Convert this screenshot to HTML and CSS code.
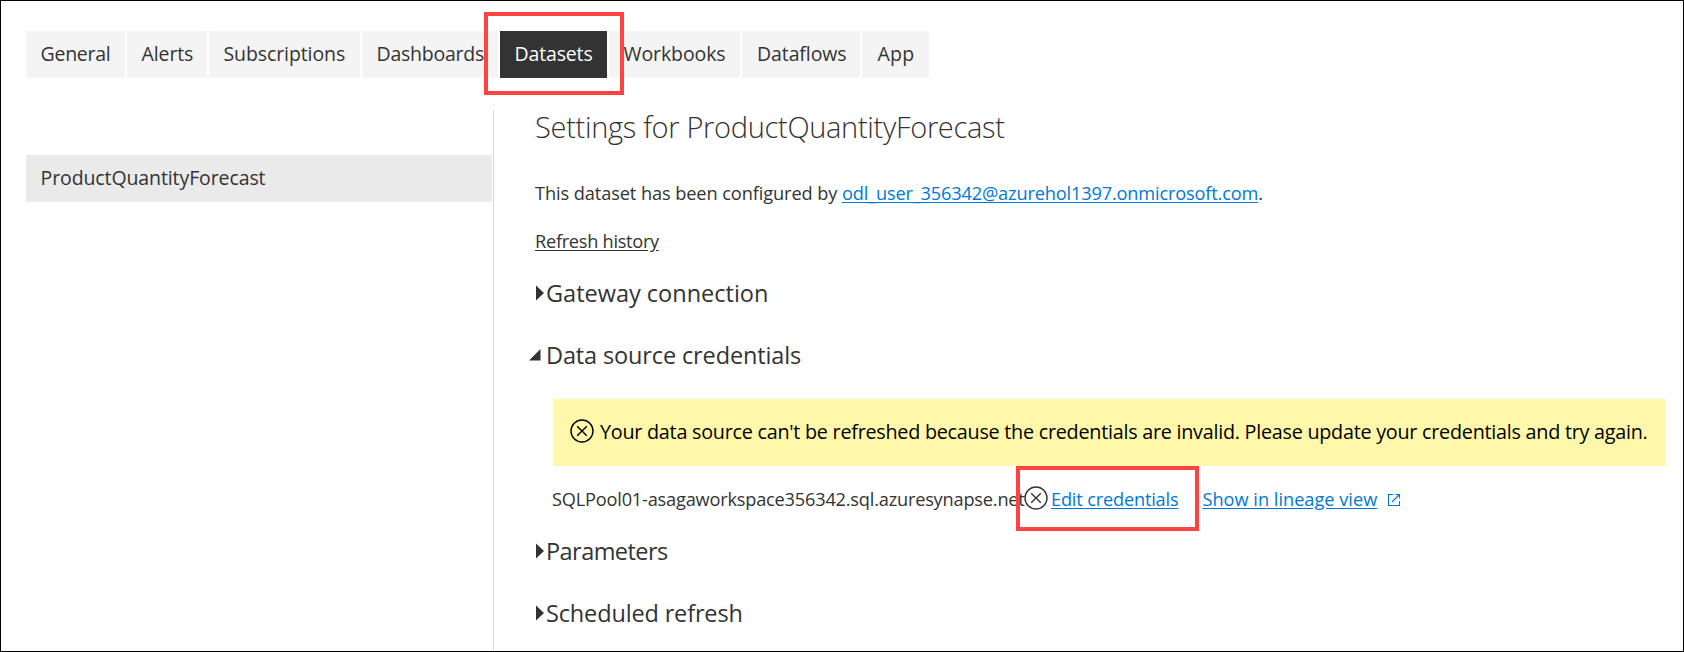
FILE: index.html
```html
<!DOCTYPE html>
<html lang="en">
<head>
<meta charset="utf-8">
<title>Dataset settings</title>
<link rel="stylesheet" href="styles.css">
</head>
<body>
<div class="page">
  <nav class="tabs">
    <a class="tab general">General</a>
    <a class="tab alerts">Alerts</a>
    <a class="tab subscriptions">Subscriptions</a>
    <a class="tab dashboards">Dashboards</a>
    <a class="tab datasets active">Datasets</a>
    <a class="tab workbooks">Workbooks</a>
    <a class="tab dataflows">Dataflows</a>
    <a class="tab app">App</a>
  </nav>
  <div class="columns">
    <aside class="sidebar">
      <div class="dataset">ProductQuantityForecast</div>
    </aside>
    <main class="settings">
      <h1 class="title">Settings for ProductQuantityForecast</h1>
      <p class="configured">This dataset has been configured by <a class="link owner">odl_user_356342@azurehol1397.onmicrosoft.com</a>.</p>
      <p class="history"><a>Refresh history</a></p>
      <h2 class="section gateway"><svg class="arrow" viewBox="0 0 12 16"><path d="M1 0.5 9 8 1 15.5Z"/></svg>Gateway connection</h2>
      <h2 class="section credentials"><svg class="arrow open" viewBox="0 0 12 12"><path d="M11.5 0V11.5H0Z"/></svg>Data source credentials</h2>
      <div class="banner">
        <svg class="error" viewBox="0 0 24 24"><circle cx="12" cy="12" r="11"/><path d="M7.2 7.2 16.8 16.8M16.8 7.2 7.2 16.8"/></svg>
        <span>Your data source can't be refreshed because the credentials are invalid. Please update your credentials and try again.</span>
      </div>
      <div class="source">
        <span class="server">SQLPool01-asagaworkspace356342.sql.azuresynapse.net</span>
        <svg class="error" viewBox="0 0 24 24"><circle cx="12" cy="12" r="11"/><path d="M7.2 7.2 16.8 16.8M16.8 7.2 7.2 16.8"/></svg>
        <a class="link edit">Edit credentials</a>
        <a class="link lineage">Show in lineage view</a>
        <svg class="external" viewBox="0 0 14 14"><path d="M6 1.5H1.5V12.5H12.5V8M8.5 1.5H12.5V5.5M12.5 1.5 5 9"/></svg>
      </div>
      <h2 class="section parameters"><svg class="arrow" viewBox="0 0 12 16"><path d="M1 0.5 9 8 1 15.5Z"/></svg>Parameters</h2>
      <h2 class="section scheduled"><svg class="arrow" viewBox="0 0 12 16"><path d="M1 0.5 9 8 1 15.5Z"/></svg>Scheduled refresh</h2>
    </main>
  </div>
  <div class="marker marker-tab"></div>
  <div class="marker marker-edit"></div>
</div>
</body>
</html>
```
FILE: styles.css
```css
* { box-sizing: border-box; }
body { margin: 0; background: #fff; color: #333; font-family: "Open Sans", "Noto Sans", sans-serif; }
.page { position: relative; width: 1684px; height: 652px; border: 1px solid #000; padding: 30px 0 0 25px; overflow: hidden; }
.tabs { display: flex; gap: 2px; height: 47px; }
.tab { background: #f4f4f4; font-size: 19.5px; line-height: 45px; padding-left: 14.5px; letter-spacing: -0.1px; white-space: nowrap; }
.general { width: 99px; letter-spacing: -0.25px; }
.alerts { width: 80px; }
.subscriptions { width: 151px; }
.dashboards { width: 136px; letter-spacing: -0.25px; }
.datasets { width: 107px; letter-spacing: -0.15px; }
.workbooks { width: 131px; }
.dataflows { width: 118px; padding-left: 15px; }
.app { width: 67px; padding-left: 15.5px; letter-spacing: 0.2px; }
.active { background: #333; color: #fff; }
.columns { display: flex; height: 541px; margin-top: 32px; }
.sidebar { width: 468px; border-right: 1px solid #d9d9d9; padding: 45px 1px 0 0; }
.dataset { height: 47px; line-height: 45px; padding-left: 14.5px; background: #eaeaea; font-size: 19.5px; letter-spacing: -0.1px; }
.settings { flex: 1; padding-left: 41px; white-space: nowrap; }
h1, h2, p { margin: 0; font-weight: 400; }
.title { font-size: 29px; font-weight: 300; line-height: 34px; letter-spacing: -0.31px; }
.configured { font-size: 18.2px; line-height: 26px; margin-top: 36px; letter-spacing: -0.09px; }
.owner { letter-spacing: -0.16px; }
.history { font-size: 18.2px; line-height: 26px; margin-top: 22px; letter-spacing: -0.28px; text-decoration: underline; text-underline-offset: 2px; }
.link { color: #0078d7; text-decoration: underline; text-underline-offset: 2px; }
.section { display: flex; align-items: center; font-size: 23.5px; line-height: 32px; letter-spacing: 0; }
.arrow { width: 12px; height: 16px; margin-right: -1px; fill: #333; }
.open { height: 12px; margin-left: -6px; margin-right: 5px; }
.gateway { margin-top: 23px; }
.credentials { margin-top: 30px; letter-spacing: -0.13px; }
.banner { display: flex; align-items: center; gap: 6px; width: 1112px; height: 67px; margin: 28px 0 0 18px; padding: 0 0 3px 17px; background: #fff8ab; color: #000; font-size: 19.8px; letter-spacing: -0.26px; }
.error { width: 24px; height: 24px; flex: none; fill: none; stroke: currentColor; stroke-width: 1.4; }
.source { display: flex; align-items: center; margin: 18px 0 0 17px; font-size: 18.2px; line-height: 30px; }
.source .error { margin-bottom: 3px; }
.server { width: 472px; letter-spacing: -0.2px; }
.edit { margin-left: 3px; letter-spacing: -0.18px; }
.lineage { margin-left: 24px; }
.external { width: 14px; height: 14px; margin: 2px 0 0 10px; fill: none; stroke: #0078d7; stroke-width: 1.1; }
.parameters { margin-top: 21px; letter-spacing: -0.55px; }
.scheduled { margin-top: 30px; letter-spacing: -0.15px; }
.marker { position: absolute; border: 4px solid #ff4343; }
.marker-tab { left: 483px; top: 11px; width: 140px; height: 83px; }
.marker-edit { left: 1015px; top: 465px; width: 183px; height: 65px; }
```
